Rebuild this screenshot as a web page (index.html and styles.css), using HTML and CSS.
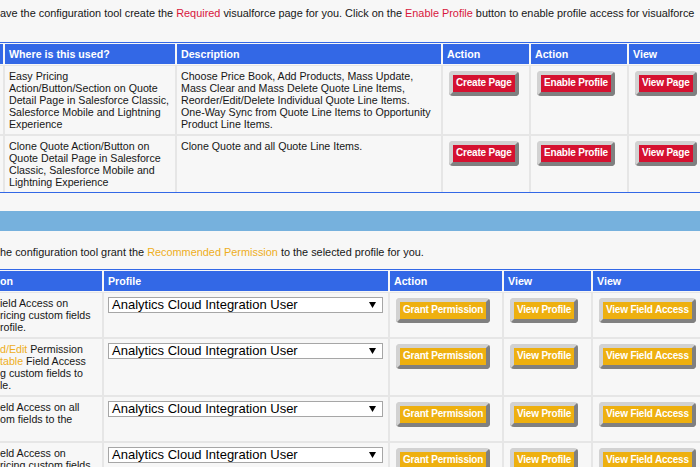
FILE: index.html
```html
<!DOCTYPE html>
<html lang="en">
<head>
<meta charset="utf-8">
<title>Configuration Tool</title>
<link rel="stylesheet" href="styles.css">
</head>
<body>
<div class="page">
  <p class="intro">ave the configuration tool create the <span class="req">Required</span> visualforce page for you. Click on the <span class="req">Enable Profile</span> button to enable profile access for visualforce</p>

  <table class="grid grid-pages">
    <colgroup>
      <col class="c-stub"><col class="c-where"><col class="c-desc"><col class="c-act1"><col class="c-act2"><col class="c-view">
    </colgroup>
    <thead>
      <tr><th class="stub"></th><th>Where is this used?</th><th>Description</th><th>Action</th><th>Action</th><th>View</th></tr>
    </thead>
    <tbody>
      <tr>
        <td class="stub"></td>
        <td>Easy Pricing<br>Action/Button/Section on Quote<br>Detail Page in Salesforce Classic,<br>Salesforce Mobile and Lightning<br>Experience</td>
        <td>Choose Price Book, Add Products, Mass Update,<br>Mass Clear and Mass Delete Quote Line Items,<br>Reorder/Edit/Delete Individual Quote Line Items.<br>One-Way Sync from Quote Line Items to Opportunity<br>Product Line Items.</td>
        <td><span class="btn btn-red">Create Page</span></td>
        <td><span class="btn btn-red">Enable Profile</span></td>
        <td><span class="btn btn-red">View Page</span></td>
      </tr>
      <tr>
        <td class="stub"></td>
        <td>Clone Quote Action/Button on<br>Quote Detail Page in Salesforce<br>Classic, Salesforce Mobile and<br>Lightning Experience</td>
        <td>Clone Quote and all Quote Line Items.</td>
        <td><span class="btn btn-red">Create Page</span></td>
        <td><span class="btn btn-red">Enable Profile</span></td>
        <td><span class="btn btn-red">View Page</span></td>
      </tr>
    </tbody>
  </table>

  <div class="bar"></div>

  <p class="intro intro-2">he configuration tool grant the <span class="rec">Recommended Permission</span> to the selected profile for you.</p>

  <table class="grid grid-perms">
    <colgroup>
      <col class="c-perm"><col class="c-profile"><col class="c-grant"><col class="c-vprof"><col class="c-vfield">
    </colgroup>
    <thead>
      <tr><th class="cut">on</th><th>Profile</th><th>Action</th><th>View</th><th>View</th></tr>
    </thead>
    <tbody>
      <tr>
        <td class="cut">ield Access on<br>ricing custom fields<br>rofile.</td>
        <td><div class="select"><span>Analytics Cloud Integration User</span><svg class="caret" width="7" height="6" viewBox="0 0 7 6"><polygon points="0,0 7,0 3.5,6"/></svg></div></td>
        <td><span class="btn btn-gold">Grant Permission</span></td>
        <td><span class="btn btn-gold">View Profile</span></td>
        <td><span class="btn btn-gold">View Field Access</span></td>
      </tr>
      <tr>
        <td class="cut"><span class="rec">d/Edit</span> Permission<br><span class="rec">table</span> Field Access<br>g custom fields to<br>le.</td>
        <td><div class="select"><span>Analytics Cloud Integration User</span><svg class="caret" width="7" height="6" viewBox="0 0 7 6"><polygon points="0,0 7,0 3.5,6"/></svg></div></td>
        <td><span class="btn btn-gold">Grant Permission</span></td>
        <td><span class="btn btn-gold">View Profile</span></td>
        <td><span class="btn btn-gold">View Field Access</span></td>
      </tr>
      <tr>
        <td class="cut">eld Access on all<br>om fields to the<br>&nbsp;</td>
        <td><div class="select"><span>Analytics Cloud Integration User</span><svg class="caret" width="7" height="6" viewBox="0 0 7 6"><polygon points="0,0 7,0 3.5,6"/></svg></div></td>
        <td><span class="btn btn-gold">Grant Permission</span></td>
        <td><span class="btn btn-gold">View Profile</span></td>
        <td><span class="btn btn-gold">View Field Access</span></td>
      </tr>
      <tr>
        <td class="cut">eld Access on<br>ricing custom fields<br>&nbsp;</td>
        <td><div class="select"><span>Analytics Cloud Integration User</span><svg class="caret" width="7" height="6" viewBox="0 0 7 6"><polygon points="0,0 7,0 3.5,6"/></svg></div></td>
        <td><span class="btn btn-gold">Grant Permission</span></td>
        <td><span class="btn btn-gold">View Profile</span></td>
        <td><span class="btn btn-gold">View Field Access</span></td>
      </tr>
    </tbody>
  </table>
</div>
</body>
</html>
```

FILE: styles.css
```css
html, body {
  margin: 0;
  padding: 0;
  overflow: hidden;
  background: #f7f7f7;
}

body {
  font-family: "Liberation Sans", Arial, sans-serif;
  font-size: 10.67px;
  color: #161616;
}

.page {
  width: 700px;
  overflow: hidden;
}

.intro {
  margin: 6px 0 0;
  font-size: 10.9px;
  line-height: 14px;
  white-space: nowrap;
}

.intro-2 {
  margin-top: 14px;
}

.req {
  color: #d8163c;
}

.rec {
  color: #eeae1c;
}

.grid {
  border-collapse: separate;
  border-spacing: 0;
  table-layout: fixed;
  border-top: 1px solid #3368e6;
  border-bottom: 1px solid #3368e6;
  margin-left: -1px;
}

.grid-pages {
  width: 729px;
  margin-top: 22px;
}

.grid-perms {
  width: 713px;
  margin-top: 10px;
}

.c-stub { width: 5px; }
.c-where { width: 172px; }
.c-desc { width: 266px; }
.c-act1 { width: 88px; }
.c-act2 { width: 98px; }
.c-view { width: 100px; }

.c-perm { width: 104px; }
.c-profile { width: 286px; }
.c-grant { width: 114px; }
.c-vprof { width: 89px; }
.c-vfield { width: 120px; }

.grid th,
.grid td {
  box-sizing: border-box;
  padding: 4px;
  line-height: 12px;
  text-align: left;
  white-space: nowrap;
  overflow: hidden;
}

.grid th {
  background: #3368e6;
  color: #ffffff;
  font-weight: bold;
  border: 1px solid #f7f7f7;
}

.grid td {
  border: 1px solid #e6e6e6;
  vertical-align: top;
}

.grid-pages tbody tr:last-child td {
  border-bottom: 0;
}

.grid .stub {
  padding: 0;
}

.grid .cut {
  padding-left: 0;
}

.btn {
  display: inline-block;
  margin: 1px 0 0 2px;
  padding: 2px 3px 3px;
  border: 4px solid;
  border-color: #d2d2d2 #808080 #808080 #d2d2d2;
  border-radius: 4px;
  font-size: 10px;
  font-weight: bold;
  line-height: 12px;
  letter-spacing: -0.2px;
  color: #ffffff;
}

.btn-red {
  background: #d51130;
}

.btn-gold {
  background: #eeb00f;
}

.select {
  display: flex;
  align-items: center;
  justify-content: space-between;
  box-sizing: border-box;
  width: 275px;
  height: 16px;
  padding: 0 6px 0 3px;
  border: 1px solid #a6a6a6;
  background: #ffffff;
  font-size: 13px;
  line-height: 14px;
  color: #000000;
}

.caret {
  fill: #000000;
}

.bar {
  height: 20px;
  margin-top: 18px;
  background: #76b1dd;
}
```
